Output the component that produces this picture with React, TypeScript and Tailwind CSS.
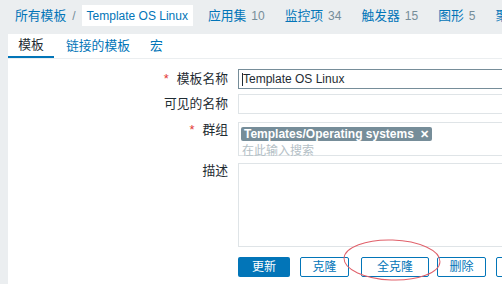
import React from "react";

const font = { fontFamily: '"Liberation Sans", Arial, "Noto Sans CJK SC", sans-serif' };

function Crumb({ name, count }: { name: string; count: string }) {
    return (
        <span className="whitespace-nowrap">
            <span className="text-[#0275b8] text-[12.8px]">{name}</span>
            <span className="text-[#768d99] ml-[5px]">{count}</span>
        </span>
    );
}

function Row({ label, required, children, top }: { label: string; required?: boolean; children: React.ReactNode; top?: boolean }) {
    return (
        <div className={`flex ${top ? "items-start" : "items-center"} gap-[10px]`}>
            <div className={`w-[220px] shrink-0 text-right text-[#1f2c33] text-[12.8px] ${top ? "pt-[1px]" : ""}`}>
                {required && <span className="text-[#e33734] mr-[8px]">*</span>}
                {label}
            </div>
            <div className="w-[300px] shrink-0">{children}</div>
        </div>
    );
}

export default function App() {
    return (
        <div className="w-[502px] h-[284px] overflow-hidden bg-[#ebeef0] text-[12px] relative" style={font}>
            <div className="flex items-center h-[34px] pl-[15px] pb-[3px] whitespace-nowrap overflow-hidden">
                <span className="text-[#0275b8] text-[12.8px]">所有模板</span>
                <span className="text-[#768d99] mx-[6px]">/</span>
                <span className="bg-white text-[#0275b8] px-[5px] h-[21px] flex items-center">Template OS Linux</span>
                <div className="flex gap-[20px] ml-[15px]">
                    <Crumb name="应用集" count="10" />
                    <Crumb name="监控项" count="34" />
                    <Crumb name="触发器" count="15" />
                    <Crumb name="图形" count="5" />
                    <Crumb name="聚合图形" count="0" />
                </div>
            </div>
            <div className="ml-[8px] bg-white h-[250px] overflow-hidden">
                <div className="flex h-[25px] border-b border-[#ebeef0] items-stretch">
                    <div className="w-[46px] flex items-center justify-center text-[#1f2c33] text-[12.8px] border-b-[2px] border-[#0275b8]">模板</div>
                    <div className="ml-[11px] px-[1px] flex items-center text-[#0275b8] text-[12.8px]">链接的模板</div>
                    <div className="ml-[19px] flex items-center text-[#0275b8] text-[12.8px]">宏</div>
                </div>
                <div className="flex flex-col gap-[5px] pt-[10px]">
                    <Row label="模板名称" required>
                        <div className="h-[20px] border border-[#768d99] flex items-center pl-[3px] text-[#1f2c33]">
                            <span className="w-px h-[13px] bg-[#1f2c33]"></span>Template OS Linux
                        </div>
                    </Row>
                    <Row label="可见的名称">
                        <div className="h-[20px] border border-[#dfe4e7]"></div>
                    </Row>
                    <Row label="群组" required top>
                        <div className="h-[34px] border border-[#dfe4e7] px-[2px] pt-[2px] mt-[3px] -mb-px">
                            <span className="inline-flex items-center h-[14px] bg-[#768d99] text-white font-bold px-[3px] rounded-[2px] text-[12px]">
                                Templates/Operating systems
                                <span className="ml-[6px] text-[11px]">✕</span>
                            </span>
                            <div className="text-[#b4c0c6] pl-[1px] leading-[17px]">在此输入搜索</div>
                        </div>
                    </Row>
                    <Row label="描述" top>
                        <div className="h-[84px] border border-[#dfe4e7] mt-[3px]"></div>
                    </Row>
                    <div className="flex pl-[230px] mt-[5px]">
                        <button className="shrink-0 w-[52px] h-[20px] bg-[#0275b8] text-white rounded-[2px]">更新</button>
                        <button className="shrink-0 ml-[10px] w-[49px] h-[20px] border border-[#0275b8] text-[#0275b8] rounded-[2px]">克隆</button>
                        <button className="shrink-0 ml-[12px] w-[68px] h-[20px] border border-[#0275b8] text-[#0275b8] rounded-[2px]">全克隆</button>
                        <button className="shrink-0 ml-[8px] w-[49px] h-[20px] border border-[#0275b8] text-[#0275b8] rounded-[2px]">删除</button>
                        <button className="shrink-0 ml-[10px] w-[49px] h-[20px] border border-[#0275b8] text-[#0275b8] rounded-[2px]">取消</button>
                    </div>
                </div>
            </div>
            <svg className="absolute left-[340px] top-[236px]" width="106" height="48" viewBox="0 0 106 48">
                <ellipse cx="52" cy="24" rx="48" ry="20" fill="none" stroke="#e0606a" strokeWidth="1" transform="rotate(2 52 24)" />
            </svg>
        </div>
    );
}
